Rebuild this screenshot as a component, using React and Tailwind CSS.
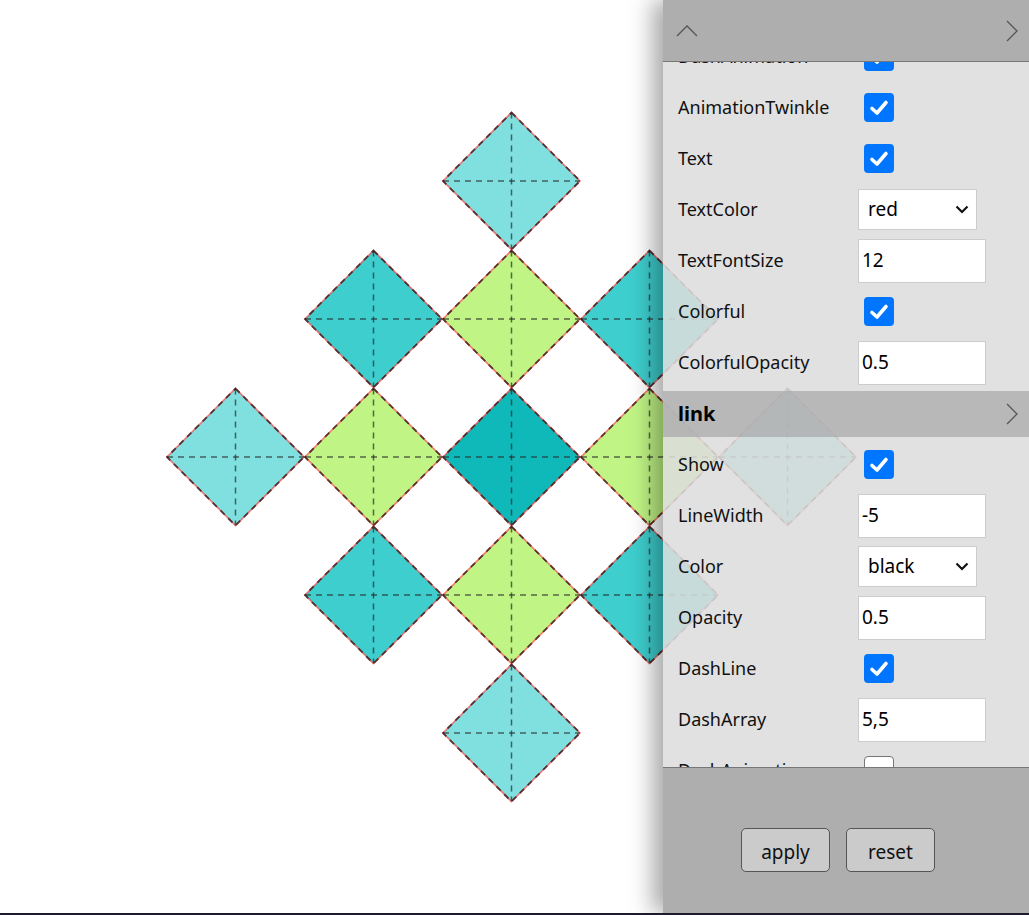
import React from 'react';

const D = 68.5;

const nodes = [
    { x: 511.5, y: 181, fill: '#80e0e0' },
    { x: 373.5, y: 319, fill: '#3ecece' },
    { x: 511.5, y: 319, fill: '#c0f585' },
    { x: 649.5, y: 319, fill: '#3ecece' },
    { x: 235.5, y: 457, fill: '#80e0e0' },
    { x: 373.5, y: 457, fill: '#c0f585' },
    { x: 511.5, y: 457, fill: '#10b9b9' },
    { x: 649.5, y: 457, fill: '#c0f585' },
    { x: 787.5, y: 457, fill: '#80e0e0' },
    { x: 373.5, y: 595, fill: '#3ecece' },
    { x: 511.5, y: 595, fill: '#c0f585' },
    { x: 649.5, y: 595, fill: '#3ecece' },
    { x: 511.5, y: 733, fill: '#80e0e0' },
];

const diamond = (n) =>
    `${n.x},${n.y - D} ${n.x + D},${n.y} ${n.x},${n.y + D} ${n.x - D},${n.y}`;

const Diagram = () => (
    <svg width="1029" height="913" className="block">
        {nodes.map((n, i) => (
            <g key={i}>
                <polygon points={diamond(n)} fill={n.fill} stroke="rgba(255,40,40,0.6)" strokeWidth="1.6" />
                <polygon points={diamond(n)} fill="none" stroke="rgba(50,30,30,0.8)" strokeWidth="1.8" strokeDasharray="6,5" />
                <line x1={n.x - D} y1={n.y} x2={n.x + D} y2={n.y} stroke="rgba(40,40,40,0.7)" strokeWidth="1.5" strokeDasharray="6,5" />
                <line x1={n.x} y1={n.y - D} x2={n.x} y2={n.y + D} stroke="rgba(40,40,40,0.7)" strokeWidth="1.5" strokeDasharray="6,5" />
            </g>
        ))}
    </svg>
);

const Check = ({ on = true }) => (
    <div className="w-[88px] pl-[6px] flex items-center">
        {on ? (
            <div className="w-[30px] h-[29px] rounded-[4px] bg-[#0075ff] flex items-center justify-center">
                <svg width="20" height="18" viewBox="0 0 20 18">
                    <path d="M3 9.5 L8 14 L17 3.5" fill="none" stroke="white" strokeWidth="3.6" strokeLinecap="round" strokeLinejoin="round" />
                </svg>
            </div>
        ) : (
            <div className="w-[30px] h-[29px] rounded-[4px] bg-white border border-[#767676]" />
        )}
    </div>
);

const TextInput = ({ value }) => (
    <div className="w-[128px] h-[44px] bg-white border border-[#cccccc] pl-[3px] flex items-center text-[19px] text-black">
        {value}
    </div>
);

const Select = ({ value }) => (
    <div className="w-[119px] h-[41px] bg-white border border-[#cccccc] pl-[9px] pr-[7px] flex items-center justify-between text-[19px] text-black">
        <span>{value}</span>
        <svg width="14" height="9" viewBox="0 0 14 9" className="shrink-0">
            <path d="M1.5 1.5 L7 7 L12.5 1.5" fill="none" stroke="#111" strokeWidth="2.2" />
        </svg>
    </div>
);

const Row = ({ label, children }) => (
    <div className="h-[51px] flex items-center pl-[15px]">
        <div className="w-[180px] text-[18px] text-[#111]">{label}</div>
        {children}
    </div>
);

const ChevronRight = () => (
    <svg width="14" height="24" viewBox="0 0 14 24">
        <path d="M2 2 L12 12 L2 22" fill="none" stroke="#555" strokeWidth="1.3" />
    </svg>
);

const App = () => {
    return (
        <div className="relative w-full h-[915px] overflow-hidden bg-white border-b-2 border-[#1c1a2c]" style={{ fontFamily: '"Noto Sans", "Open Sans", sans-serif' }}>

            {/* Diagram */}
            <Diagram />

            {/* Settings panel */}
            <div className="absolute top-0 right-0 w-[366px] h-[913px] flex flex-col shadow-[-10px_0_22px_rgba(0,0,0,0.35)]">
                <div className="h-[62px] bg-[#aeaeae] border-b border-[#777] flex items-center justify-between pl-[13px] pr-[10px] shrink-0">
                    <svg width="22" height="12" viewBox="0 0 22 12">
                        <path d="M1 11 L11 1 L21 11" fill="none" stroke="#555" strokeWidth="1.3" />
                    </svg>
                    <ChevronRight />
                </div>

                <div className="flex-1 overflow-hidden bg-[rgba(220,220,220,0.87)]">
                    <div className="mt-[-31px]">
                        <Row label="DashAnimation"><Check /></Row>
                        <Row label="AnimationTwinkle"><Check /></Row>
                        <Row label="Text"><Check /></Row>
                        <Row label="TextColor"><Select value="red" /></Row>
                        <Row label="TextFontSize"><TextInput value="12" /></Row>
                        <Row label="Colorful"><Check /></Row>
                        <Row label="ColorfulOpacity"><TextInput value="0.5" /></Row>

                        <div className="mt-[3px] h-[46px] bg-[rgba(170,170,170,0.75)] flex items-center justify-between pl-[15px] pr-[10px]">
                            <span className="text-[20px] font-bold text-black">link</span>
                            <ChevronRight />
                        </div>
                        <div className="h-[2px]" />

                        <Row label="Show"><Check /></Row>
                        <Row label="LineWidth"><TextInput value="-5" /></Row>
                        <Row label="Color"><Select value="black" /></Row>
                        <Row label="Opacity"><TextInput value="0.5" /></Row>
                        <Row label="DashLine"><Check /></Row>
                        <Row label="DashArray"><TextInput value="5,5" /></Row>
                        <Row label="DashAnimation"><Check on={false} /></Row>
                    </div>
                </div>

                <div className="h-[146px] bg-[#aeaeae] border-t border-[#777] flex items-center justify-center gap-[16px] pt-[19px] pr-[16px] shrink-0">
                    <button className="w-[89px] h-[44px] pt-[5px] rounded-[5px] border border-[#555] bg-[#cbcbcb] text-[19px] text-[#111]">apply</button>
                    <button className="w-[89px] h-[44px] pt-[5px] rounded-[5px] border border-[#555] bg-[#cbcbcb] text-[19px] text-[#111]">reset</button>
                </div>
            </div>
        </div>
    );
};

export default App;
